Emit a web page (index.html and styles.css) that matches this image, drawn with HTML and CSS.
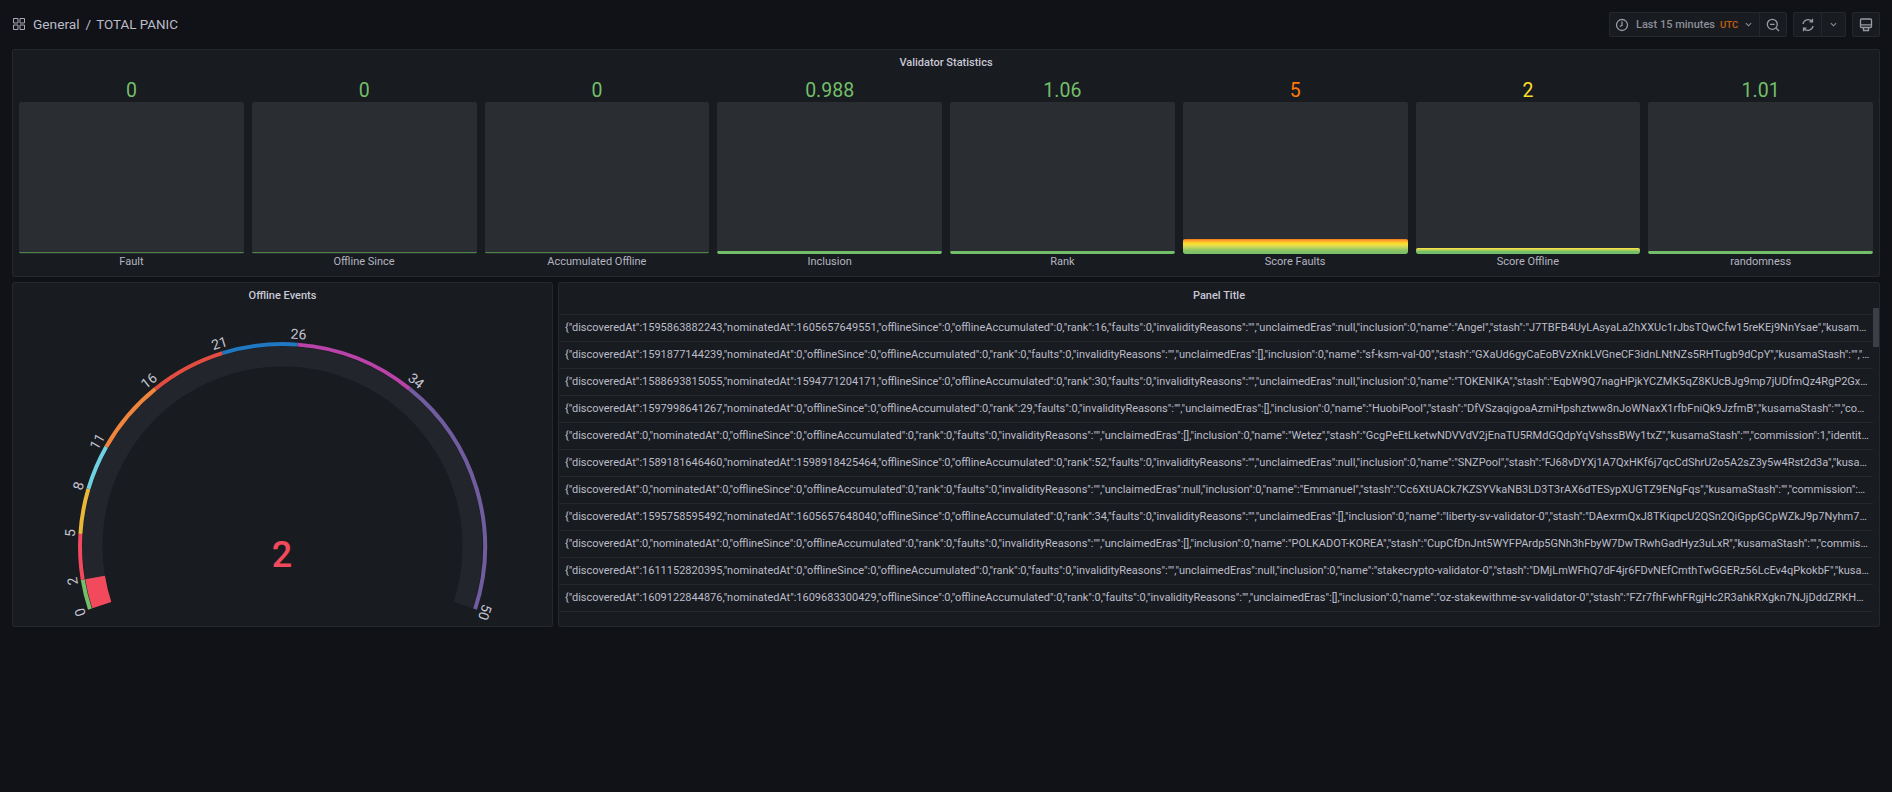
FILE: index.html
```html
<!DOCTYPE html>
<html lang="en">
<head>
<meta charset="utf-8">
<title>TOTAL PANIC</title>
<link rel="stylesheet" href="styles.css">
</head>
<body>
<header class="topbar">
  <div class="crumb">
    <svg class="crumb-icon" viewBox="0 0 12 12" width="12" height="12"><path d="M.5.5h4.5v4.5h-4.500zM7 .5h4.500v4.500H7zM.5 7h4.500v4.500H.5zM7 7h4.500v4.500H7z"/></svg>
    <span class="crumb-folder">General</span>
    <span class="crumb-sep">/</span>
    <span class="crumb-name">TOTAL PANIC</span>
  </div>
  <div class="tools">
    <div class="btn-group time">
      <div class="btn time-main">
        <svg class="ico" viewBox="0 0 14 14" width="14" height="14"><circle cx="7" cy="7" r="5.500"/><path d="M7 3.500V7.300L4.800 8.500"/></svg>
        <span class="time-label">Last 15 minutes</span>
        <span class="utc">UTC</span>
        <svg class="chev" viewBox="0 0 8 5" width="7" height="5"><path d="M1 1l3 3 3-3"/></svg>
      </div>
      <div class="btn zoom">
        <svg class="ico" viewBox="0 0 14 14" width="14" height="14"><circle cx="6.300" cy="6.300" r="5"/><path d="M10 10l3 3M4 6.300h4.600"/></svg>
      </div>
    </div>
    <div class="btn-group">
      <div class="btn refresh">
        <svg class="ico" viewBox="0 0 14 14" width="14" height="14"><path d="M2 6A5.200 5.200 0 0 1 11 3.300M12 8a5.200 5.200 0 0 1-9 2.700M11.500 .8v3h-3M2.500 13.200v-3h3"/></svg>
      </div>
      <div class="btn refresh-more">
        <svg class="chev" viewBox="0 0 8 5" width="7" height="5"><path d="M1 1l3 3 3-3"/></svg>
      </div>
    </div>
    <div class="btn-group">
      <div class="btn tv">
        <svg class="ico" viewBox="0 0 14 14" width="14" height="14"><rect x="1.500" y="1" width="11" height="8.500" rx="1"/><path d="M1.500 6.800h11M4.500 9.500v3h5v-3"/></svg>
      </div>
    </div>
  </div>
</header>

<main class="dash">
  <section class="panel stats">
    <h2 class="panel-title">Validator Statistics</h2>
    <div class="bars">
      <div class="bar-col">
        <div class="bar-value green">0</div>
        <div class="bar-track"><div class="bar-fill fill-zero"></div></div>
        <div class="bar-label">Fault</div>
      </div>
      <div class="bar-col">
        <div class="bar-value green">0</div>
        <div class="bar-track"><div class="bar-fill fill-zero"></div></div>
        <div class="bar-label">Offline Since</div>
      </div>
      <div class="bar-col">
        <div class="bar-value green">0</div>
        <div class="bar-track"><div class="bar-fill fill-zero"></div></div>
        <div class="bar-label">Accumulated Offline</div>
      </div>
      <div class="bar-col">
        <div class="bar-value green">0.988</div>
        <div class="bar-track"><div class="bar-fill fill-low"></div></div>
        <div class="bar-label">Inclusion</div>
      </div>
      <div class="bar-col">
        <div class="bar-value green">1.06</div>
        <div class="bar-track"><div class="bar-fill fill-low"></div></div>
        <div class="bar-label">Rank</div>
      </div>
      <div class="bar-col">
        <div class="bar-value orange">5</div>
        <div class="bar-track"><div class="bar-fill fill-faults"></div></div>
        <div class="bar-label">Score Faults</div>
      </div>
      <div class="bar-col">
        <div class="bar-value yellow">2</div>
        <div class="bar-track"><div class="bar-fill fill-offline"></div></div>
        <div class="bar-label">Score Offline</div>
      </div>
      <div class="bar-col">
        <div class="bar-value green">1.01</div>
        <div class="bar-track"><div class="bar-fill fill-low"></div></div>
        <div class="bar-label">randomness</div>
      </div>
    </div>
  </section>

  <div class="lower">
    <section class="panel gauge-panel">
      <h2 class="panel-title">Offline Events</h2>
      <svg class="gauge" viewBox="12 310 541 317" width="541" height="317">
        <g class="track">
          <path pathLength="50" d="M101.800 606.200A190 190 0 1 1 463.200 606.200"/>
        </g>
        <path class="value-fill" pathLength="50" stroke-dasharray="2 100" d="M101.800 606.200A190 190 0 1 1 463.200 606.200"/>
        <g class="thresholds">
          <path class="t-green" pathLength="50" stroke-dasharray="2 100" d="M89.900 610.100A202.500 202.500 0 1 1 475.100 610.100"/>
          <path class="t-red" pathLength="50" stroke-dasharray="0 2 3 100" d="M89.900 610.100A202.500 202.500 0 1 1 475.100 610.100"/>
          <path class="t-yellow" pathLength="50" stroke-dasharray="0 5 3 100" d="M89.900 610.100A202.500 202.500 0 1 1 475.100 610.100"/>
          <path class="t-cyan" pathLength="50" stroke-dasharray="0 8 3 100" d="M89.900 610.100A202.500 202.500 0 1 1 475.100 610.100"/>
          <path class="t-orange" pathLength="50" stroke-dasharray="0 11 5 100" d="M89.900 610.100A202.500 202.500 0 1 1 475.100 610.100"/>
          <path class="t-redb" pathLength="50" stroke-dasharray="0 16 5 100" d="M89.900 610.100A202.500 202.500 0 1 1 475.100 610.100"/>
          <path class="t-blue" pathLength="50" stroke-dasharray="0 21 5 100" d="M89.900 610.100A202.500 202.500 0 1 1 475.100 610.100"/>
          <path class="t-magenta" pathLength="50" stroke-dasharray="0 26 8 100" d="M89.900 610.100A202.500 202.500 0 1 1 475.100 610.100"/>
          <path class="t-purple" pathLength="50" stroke-dasharray="0 34 16 100" d="M89.900 610.100A202.500 202.500 0 1 1 475.100 610.100"/>
        </g>
        <g class="ticks" transform="translate(282.500 547.500)">
          <text transform="rotate(-108) translate(0 -213)">0</text>
          <text transform="rotate(-99.360) translate(0 -213)">2</text>
          <text transform="rotate(-86.400) translate(0 -213)">5</text>
          <text transform="rotate(-73.440) translate(0 -213)">8</text>
          <text transform="rotate(-60.480) translate(0 -213)">11</text>
          <text transform="rotate(-38.880) translate(0 -213)">16</text>
          <text transform="rotate(-17.280) translate(0 -213)">21</text>
          <text transform="rotate(4.320) translate(0 -213)">26</text>
          <text transform="rotate(38.880) translate(0 -213)">34</text>
          <text transform="rotate(108) translate(0 -213)">50</text>
        </g>
        <text class="gauge-value" x="282" y="568">2</text>
      </svg>
    </section>

    <section class="panel table-panel">
      <h2 class="panel-title">Panel Title</h2>
      <div class="table-wrap">
        <div class="rows">
          <div class="row">{"discoveredAt":1595863882243,"nominatedAt":1605657649551,"offlineSince":0,"offlineAccumulated":0,"rank":16,"faults":0,"invalidityReasons":"","unclaimedEras":null,"inclusion":0,"name":"Angel","stash":"J7TBFB4UyLAsyaLa2hXXUc1rJbsTQwCfw15reKEj9NnYsae","kusamaStash":"","commission":1,"identity":{}}</div>
          <div class="row">{"discoveredAt":1591877144239,"nominatedAt":0,"offlineSince":0,"offlineAccumulated":0,"rank":0,"faults":0,"invalidityReasons":"","unclaimedEras":[],"inclusion":0,"name":"sf-ksm-val-00","stash":"GXaUd6gyCaEoBVzXnkLVGneCF3idnLNtNZs5RHTugb9dCpY","kusamaStash":"","commission":1,"identity":{}}</div>
          <div class="row">{"discoveredAt":1588693815055,"nominatedAt":1594771204171,"offlineSince":0,"offlineAccumulated":0,"rank":30,"faults":0,"invalidityReasons":"","unclaimedEras":null,"inclusion":0,"name":"TOKENIKA","stash":"EqbW9Q7nagHPjkYCZMK5qZ8KUcBJg9mp7jUDfmQz4RgP2GxaBcDeF","kusamaStash":"","commission":1}</div>
          <div class="row">{"discoveredAt":1597998641267,"nominatedAt":0,"offlineSince":0,"offlineAccumulated":0,"rank":29,"faults":0,"invalidityReasons":"","unclaimedEras":[],"inclusion":0,"name":"HuobiPool","stash":"DfVSzaqigoaAzmiHpshztww8nJoWNaxX1rfbFniQk9JzfmB","kusamaStash":"","commission":1,"identity":{}}</div>
          <div class="row">{"discoveredAt":0,"nominatedAt":0,"offlineSince":0,"offlineAccumulated":0,"rank":0,"faults":0,"invalidityReasons":"","unclaimedEras":[],"inclusion":0,"name":"Wetez","stash":"GcgPeEtLketwNDVVdV2jEnaTU5RMdGQdpYqVshssBWy1txZ","kusamaStash":"","commission":1,"identity":{"display":""}}</div>
          <div class="row">{"discoveredAt":1589181646460,"nominatedAt":1598918425464,"offlineSince":0,"offlineAccumulated":0,"rank":52,"faults":0,"invalidityReasons":"","unclaimedEras":null,"inclusion":0,"name":"SNZPool","stash":"FJ68vDYXj1A7QxHKf6j7qcCdShrU2o5A2sZ3y5w4Rst2d3a","kusamaStash":"","commission":1}</div>
          <div class="row">{"discoveredAt":0,"nominatedAt":0,"offlineSince":0,"offlineAccumulated":0,"rank":0,"faults":0,"invalidityReasons":"","unclaimedEras":null,"inclusion":0,"name":"Emmanuel","stash":"Cc6XtUACk7KZSYVkaNB3LD3T3rAX6dTESypXUGTZ9ENgFqs","kusamaStash":"","commission":1,"identity":{}}</div>
          <div class="row">{"discoveredAt":1595758595492,"nominatedAt":1605657648040,"offlineSince":0,"offlineAccumulated":0,"rank":34,"faults":0,"invalidityReasons":"","unclaimedEras":[],"inclusion":0,"name":"liberty-sv-validator-0","stash":"DAexrmQxJ8TKiqpcU2QSn2QiGppGCpWZkJ9p7Nyhm7aBcDeF","kusamaStash":"","commission":1}</div>
          <div class="row">{"discoveredAt":0,"nominatedAt":0,"offlineSince":0,"offlineAccumulated":0,"rank":0,"faults":0,"invalidityReasons":"","unclaimedEras":[],"inclusion":0,"name":"POLKADOT-KOREA","stash":"CupCfDnJnt5WYFPArdp5GNh3hFbyW7DwTRwhGadHyz3uLxR","kusamaStash":"","commission":1,"identity":{}}</div>
          <div class="row">{"discoveredAt":1611152820395,"nominatedAt":0,"offlineSince":0,"offlineAccumulated":0,"rank":0,"faults":0,"invalidityReasons":"","unclaimedEras":null,"inclusion":0,"name":"stakecrypto-validator-0","stash":"DMjLmWFhQ7dF4jr6FDvNEfCmthTwGGERz56LcEv4qPkokbF","kusamaStash":"","commission":1}</div>
          <div class="row">{"discoveredAt":1609122844876,"nominatedAt":1609683300429,"offlineSince":0,"offlineAccumulated":0,"rank":0,"faults":0,"invalidityReasons":"","unclaimedEras":[],"inclusion":0,"name":"oz-stakewithme-sv-validator-0","stash":"FZr7fhFwhFRgjHc2R3ahkRXgkn7NJjDddZRKHWWcDeFgHi","kusamaStash":"","commission":1}</div>
        </div>
        <div class="scroll"><div class="scroll-thumb"></div></div>
      </div>
    </section>
  </div>
</main>
</body>
</html>
```
FILE: styles.css
```css
* { box-sizing: border-box; }
html, body { margin: 0; height: 100%; }
body {
  width: 1892px;
  height: 792px;
  overflow: hidden;
  background: #111217;
  color: #ccccdc;
  font-family: Roboto, "Liberation Sans", sans-serif;
  padding: 12px 12px 0;
}
.topbar {
  display: flex;
  justify-content: space-between;
  align-items: center;
  height: 25px;
  margin-bottom: 12px;
}
.crumb { display: flex; align-items: center; padding: 0 0 1px 1px; font-size: 13.700px; color: #bcbcca; }
.crumb-icon { fill: none; stroke: #a9a9b8; stroke-width: 1; margin-right: 8px; }
.crumb-sep { margin: 0 5px 0 6px; }
.crumb-name { font-size: 13.400px; }
.tools { display: flex; gap: 6px; }
.btn-group {
  display: flex;
  height: 25px;
  background: #181b1f;
  border: 1px solid rgba(204, 204, 220, .07);
  border-radius: 2px;
}
.btn { display: flex; align-items: center; justify-content: center; }
.btn + .btn { border-left: 1px solid rgba(204, 204, 220, .07); }
.time-main { width: 149px; padding-left: 5px; justify-content: flex-start; white-space: nowrap; }
.time-label { margin-left: 7px; font-size: 11px; font-weight: 500; color: #8e8e9a; }
.utc { margin-left: 5px; font-size: 9.500px; font-weight: 500; color: #ff780a; opacity: .75; }
.chev { fill: none; stroke: #8e8e9a; stroke-width: 1.200; margin-left: 7px; }
.zoom { width: 27px; }
.refresh { width: 27px; }
.refresh-more { width: 24px; }
.refresh-more .chev { margin-left: 0; }
.tv { width: 26px; }
.ico { fill: none; stroke: #9a9aa6; stroke-width: 1.300; }

.dash { display: flex; flex-direction: column; gap: 5px; width: 1868px; }
.panel {
  background: #181b1f;
  border: 1px solid rgba(204, 204, 220, .07);
  border-radius: 3px;
}
.panel-title {
  margin: 0;
  height: 26px;
  line-height: 25px;
  font-size: 11px;
  font-weight: 500;
  text-align: center;
  color: #c8c8d6;
}
.stats { height: 228px; }
.bars { display: grid; grid-template-columns: repeat(8, 1fr); gap: 8px; padding: 0 6px; }
.bar-col { display: flex; flex-direction: column; }
.bar-value { height: 26px; line-height: 30px; font-size: 19.500px; text-align: center; }
.green { color: #73bf69; }
.orange { color: #ff780a; }
.yellow { color: #fade2a; }
.bar-track {
  display: flex;
  align-items: flex-end;
  height: 152px;
  background: #2a2d32;
  border-radius: 2px;
  overflow: hidden;
}
.bar-fill { width: 100%; border-radius: 2px; }
.fill-zero { height: 2px; border-top: 1px solid #4f8449; background: #2a2d32; }
.fill-low { height: 3px; background: #73bf69; }
.fill-faults { height: 15px; background: linear-gradient(to top, #73bf69 0%, #8ec465 25%, #e0dd55 55%, #fade2a 70%, #ff9830 92%, #e8780a 100%); }
.fill-offline { height: 6px; background: linear-gradient(to top, #73bf69 0%, #73bf69 40%, #f0e04a 90%); }
.bar-label { height: 16px; line-height: 16px; font-size: 11px; text-align: center; color: #b4b4c2; }

.lower { display: flex; gap: 5px; height: 345px; }
.gauge-panel { width: 541px; flex: none; }
.gauge { display: block; margin: 0 0 0 -1px; }
.track path { fill: none; stroke: #22252b; stroke-width: 20; }
.value-fill { fill: none; stroke: #f2495c; stroke-width: 20; }
.thresholds path { fill: none; stroke-width: 4; }
.t-green { stroke: #73bf69; }
.t-red { stroke: #f2495c; }
.t-yellow { stroke: #eab839; }
.t-cyan { stroke: #6ed0e0; }
.t-orange { stroke: #ef843c; }
.t-redb { stroke: #e24d42; }
.t-blue { stroke: #1f78c1; }
.t-magenta { stroke: #ba43a9; }
.t-purple { stroke: #705da0; }
.ticks text { font-size: 14px; fill: #c4c4d2; text-anchor: middle; dominant-baseline: central; }
.gauge-value { font-size: 36px; font-weight: 500; fill: #f2495c; text-anchor: middle; }

.table-panel { flex: 1; min-width: 0; }
.table-wrap { display: flex; margin-top: 5px; height: 312px; border-top: 1px solid rgba(204, 204, 220, .07); }
.rows { flex: 1; min-width: 0; }
.row {
  height: 27px;
  line-height: 26px;
  padding: 0 3px 0 6px;
  font-size: 11px;
  color: #bcbcca;
  white-space: nowrap;
  overflow: hidden;
  text-overflow: ellipsis;
  border-bottom: 1px solid rgba(204, 204, 220, .07);
}
.scroll { width: 6px; margin-top: -7px; }
.scroll-thumb { height: 39px; background: #3c3f45; border-radius: 1px; }
```
